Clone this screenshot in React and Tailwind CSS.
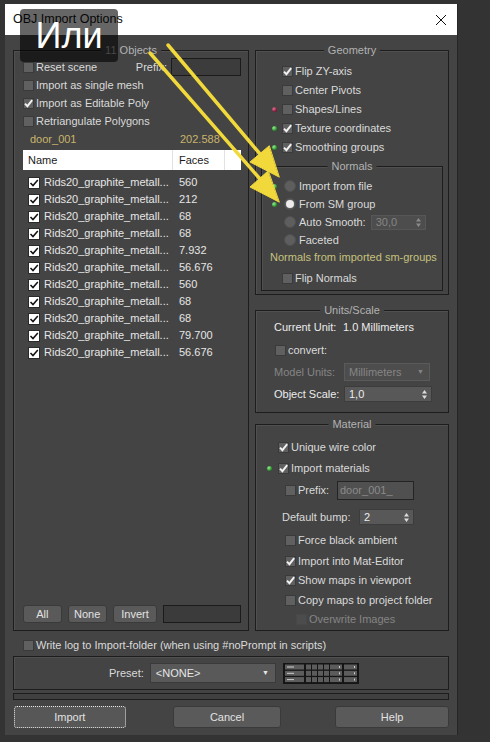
import React from 'react';

const rows = ['560', '212', '68', '68', '7.932', '56.676', '560', '68', '68', '79.700', '56.676'];

function Box({ checked, disabled }) {
  return (
    <span
      className={`flex h-[11px] w-[11px] shrink-0 items-center justify-center border ${
        disabled ? 'border-[#484848] bg-[#4c4c4c]' : 'border-[#3a3a3a] bg-[#606060]'
      }`}
    >
      {checked && (
        <svg width="9" height="9" viewBox="0 0 9 9">
          <path d="M1 4.6 L3.4 7.2 L8.2 1.2" fill="none" stroke="#f2f2f2" strokeWidth="1.9" />
        </svg>
      )}
    </span>
  );
}

function Check({ label, checked, disabled, className = '' }) {
  return (
    <div className={`flex items-center ${className}`}>
      <Box checked={checked} disabled={disabled} />
      <span className={`ml-[2px] whitespace-nowrap ${disabled ? 'text-[#858585]' : ''}`}>{label}</span>
    </div>
  );
}

function Radio({ on }) {
  return (
    <span className="flex h-[12px] w-[12px] shrink-0 items-center justify-center rounded-full border border-[#505050] bg-[#5e5e5e]">
      {on && <span className="h-[8px] w-[8px] rounded-full bg-[#ececec]" />}
    </span>
  );
}

function Dot({ red }) {
  return (
    <span
      className={`h-[5px] w-[5px] rounded-full ${
        red
          ? 'bg-[radial-gradient(circle_at_35%_35%,#e07090_0%,#701030_75%)]'
          : 'bg-[radial-gradient(circle_at_35%_35%,#90f090_0%,#1c7a1c_75%)]'
      }`}
    />
  );
}

function Spin({ value, disabled, className = '' }) {
  return (
    <div
      className={`flex items-center justify-between border pl-[4px] pr-[4px] ${
        disabled ? 'border-[#575757] bg-[#4d4d4d] text-[#858585]' : 'border-[#3c3c3c] bg-[#585858] text-[#ececec]'
      } ${className}`}
    >
      <span>{value}</span>
      <svg width="5" height="9" viewBox="0 0 5 9">
        <path d="M2.5 0 L5 3.4 H0 Z M0 5.6 H5 L2.5 9 Z" fill={disabled ? '#8a8a8a' : '#dcdcdc'} />
      </svg>
    </div>
  );
}

function Group({ label, className = '', children }) {
  return (
    <div className={`relative border border-[#1d1d1d] shadow-[inset_1px_1px_0_#505050] ${className}`}>
      <span className="absolute left-1/2 top-[-8px] -translate-x-1/2 whitespace-nowrap bg-[#444] px-[4px] leading-[14px] text-[#b2b2b2]">
        {label}
      </span>
      {children}
    </div>
  );
}

function Btn({ children, className = '' }) {
  return (
    <div
      className={`flex items-center justify-center rounded-[3px] border border-[#3a3a3a] bg-[#5a5a5a] text-[#e2e2e2] ${className}`}
    >
      {children}
    </div>
  );
}

export default function App() {
  return (
    <div className="relative h-[742px] w-[490px] overflow-hidden bg-[#333] font-['Liberation_Sans',Arial,sans-serif] text-[11px] text-[#dadada]">
      <div className="ml-[5px] mt-[4px] flex h-[731px] w-[453px] flex-col border-r border-[#262626]">
        {/* title bar */}
        <div className="flex h-[31px] items-center bg-white pl-[8px] pr-[10px] text-[12.5px] text-[#111]">
          <span>OBJ Import Options</span>
          <svg className="ml-auto" width="12" height="12" viewBox="0 0 12 12">
            <path d="M1 1 L11 11 M11 1 L1 11" stroke="#111" strokeWidth="1" />
          </svg>
        </div>

        {/* body */}
        <div className="flex flex-1 flex-col bg-[#444] px-[8px] pt-[15px]">
          <div className="flex gap-[6px]">
            {/* objects */}
            <Group label="11 Objects" className="flex h-[581px] w-[236px] flex-col pb-[7px] pl-[9px] pr-[7px] pt-[7px]">
              <div className="flex h-[18px] items-center">
                <Check label="Reset scene" />
                <span className="ml-auto mr-[4px]">Prefix:</span>
                <div className="h-[18px] w-[70px] border border-[#1b1b1b] bg-[#3c3c3c]" />
              </div>
              <Check label="Import as single mesh" className="h-[18px]" />
              <Check label="Import as Editable Poly" checked className="h-[18px]" />
              <Check label="Retriangulate Polygons" className="h-[18px]" />
              <div className="flex h-[18px] items-center pl-[7px] text-[#c9b46c]">
                <span className="w-[150px]">door_001</span>
                <span>202.588</span>
              </div>
              <div className="mt-[2px] flex h-[20px] items-center bg-white text-[11px] text-[#1a1a1a]">
                <span className="w-[149px] pl-[5px]">Name</span>
                <span className="h-full w-[53px] border-l border-r border-[#e2e2e2] pl-[6px] leading-[20px]">Faces</span>
              </div>
              <div className="mt-[4px] flex flex-col text-[11px] text-[#e6e6e6]">
                {rows.map((f, i) => (
                  <div key={i} className="flex h-[17px] items-center pl-[5px]">
                    <span className="flex h-[12px] w-[12px] items-center justify-center border border-[#2a2a2a] bg-white">
                      <svg width="10" height="10" viewBox="0 0 10 10">
                        <path d="M1.5 5 L4 7.6 L8.8 2" fill="none" stroke="#111" strokeWidth="1.5" />
                      </svg>
                    </span>
                    <span className="ml-[4px] w-[135px] whitespace-nowrap">Rids20_graphite_metall...</span>
                    <span>{f}</span>
                  </div>
                ))}
              </div>
              <div className="mt-auto flex h-[18px] gap-[6px] text-[11px]">
                <Btn className="w-[39px]">All</Btn>
                <Btn className="w-[39px]">None</Btn>
                <Btn className="w-[45px]">Invert</Btn>
                <div className="w-[78px] border border-[#1b1b1b] bg-[#3b3b3b]" />
              </div>
            </Group>

            {/* right column */}
            <div className="flex w-[195px] flex-col">
              <Group label="Geometry" className="h-[245px] pl-[14px] pt-[11px]">
                {[
                  ['Flip ZY-axis', true, null],
                  ['Center Pivots', false, null],
                  ['Shapes/Lines', false, 'red'],
                  ['Texture coordinates', true, 'green'],
                  ['Smoothing groups', true, 'green'],
                ].map(([l, c, d]) => (
                  <div key={l} className="flex h-[19px] items-center">
                    <span className="flex w-[8px] justify-center">{d && <Dot red={d === 'red'} />}</span>
                    <span className="ml-[4px]">
                      <Check label={l} checked={c} />
                    </span>
                  </div>
                ))}
                <div className="ml-[-9px] mr-[5px] mt-[9px] h-[125px]">
                  <Group label="Normals" className="h-[125px] pl-[8px] pt-[10px]">
                    {[
                      ['Import from file', false],
                      ['From SM group', true],
                    ].map(([l, on]) => (
                      <div key={l} className="flex h-[18px] items-center">
                        <span className="flex w-[8px] justify-center">
                          <Dot />
                        </span>
                        <span className="ml-[6px]">
                          <Radio on={on} />
                        </span>
                        <span className="ml-[3px]">{l}</span>
                      </div>
                    ))}
                    <div className="flex h-[18px] items-center">
                      <span className="w-[8px]" />
                      <span className="ml-[6px]">
                        <Radio />
                      </span>
                      <span className="ml-[3px]">Auto Smooth:</span>
                      <Spin value="30,0" disabled className="ml-[5px] h-[15px] w-[55px]" />
                    </div>
                    <div className="flex h-[18px] items-center">
                      <span className="w-[8px]" />
                      <span className="ml-[6px]">
                        <Radio />
                      </span>
                      <span className="ml-[3px]">Faceted</span>
                    </div>
                    <div className="flex h-[17px] items-center text-[#c5c27c]">Normals from imported sm-groups</div>
                    <Check label="Flip Normals" className="ml-[12px] mt-[3px] h-[18px]" />
                  </Group>
                </div>
              </Group>

              <Group label="Units/Scale" className="mt-[15px] h-[103px] pl-[18px] pt-[7px]">
                <div className="flex h-[18px] items-center text-[#ececec]">
                  <span className="w-[69px]">Current Unit:</span>
                  <span>1.0 Millimeters</span>
                </div>
                <Check label="convert:" className="ml-[1px] mt-[5px] h-[18px]" />
                <div className="mt-[4px] flex h-[18px] items-center">
                  <span className="w-[70px] text-[#858585]">Model Units:</span>
                  <div className="flex h-[18px] w-[86px] items-center justify-between border border-[#5a5a5a] bg-[#4d4d4d] pl-[4px] pr-[5px] text-[#858585]">
                    <span>Millimeters</span>
                    <span className="text-[7px]">▼</span>
                  </div>
                </div>
                <div className="mt-[4px] flex h-[18px] items-center text-[#ececec]">
                  <span className="w-[70px]">Object Scale:</span>
                  <Spin value="1,0" className="h-[16px] w-[88px]" />
                </div>
              </Group>

              <Group label="Material" className="mt-[11px] h-[207px] pl-[11px] pt-[12px]">
                <div className="flex h-[20px] items-center">
                  <span className="w-[5px]" />
                  <Check label="Unique wire color" checked className="ml-[6px]" />
                </div>
                <div className="mt-[1px] flex h-[20px] items-center">
                  <span className="flex w-[5px] justify-center">
                    <Dot />
                  </span>
                  <Check label="Import materials" checked className="ml-[6px]" />
                </div>
                <div className="mt-[2px] flex h-[20px] items-center">
                  <Check label="Prefix:" className="ml-[18px] w-[52px]" />
                  <div className="flex h-[19px] w-[77px] items-center border border-[#242424] bg-[#505050] pl-[2px] text-[#8a8a8a]">
                    door_001_
                  </div>
                </div>
                <div className="mt-[7px] flex h-[20px] items-center">
                  <span className="ml-[15px] w-[77px]">Default bump:</span>
                  <Spin value="2" className="h-[16px] w-[55px]" />
                </div>
                <Check label="Force black ambient" className="ml-[18px] mt-[3px] h-[20px]" />
                <Check label="Import into Mat-Editor" checked className="ml-[18px] mt-[1px] h-[20px]" />
                <Check label="Show maps in viewport" checked className="ml-[18px] h-[19px]" />
                <Check label="Copy maps to project folder" className="ml-[18px] h-[20px]" />
                <Check label="Overwrite Images" disabled className="ml-[29px] h-[19px]" />
              </Group>
            </div>
          </div>

          <Check
            label="Write log to Import-folder (when using #noPrompt in scripts)"
            className="ml-[10px] mt-[5px] h-[18px]"
          />

          <div className="mt-[2px] flex h-[34px] items-center border border-[#1d1d1d] pl-[95px] shadow-[inset_1px_1px_0_#505050]">
            <span className="text-[11px]">Preset:</span>
            <div className="ml-[6px] flex h-[20px] w-[126px] items-center justify-between border border-[#3a3a3a] bg-[#595959] pl-[5px] pr-[6px] text-[11px] text-[#e6e6e6]">
              <span>&lt;NONE&gt;</span>
              <span className="text-[7px]">▼</span>
            </div>
            <svg className="ml-[7px]" width="76" height="21" viewBox="0 0 76 21">
              <rect x="0" y="0" width="76" height="21" fill="#151515" />
              {[0, 1, 2].map((r) => {
                const y = 1.5 + r * 6.3;
                return (
                  <g key={r}>
                    <rect x="2" y={y} width="19" height="5" fill="#5c5c5c" />
                    <rect x="4" y={y + 2} width="7" height="1" fill="#d0d0d0" />
                    {[23, 29, 35, 41].map((x) => (
                      <rect key={x} x={x} y={y} width="5" height="5" fill="#5c5c5c" />
                    ))}
                    <rect x="47" y={y} width="12" height="5" fill="#5c5c5c" />
                    <rect x="56" y={y + 1.5} width="1" height="2" fill="#d0d0d0" />
                    <rect x="61" y={y} width="13" height="5" fill="#5c5c5c" />
                    <rect x="71" y={y + 1.5} width="1" height="2" fill="#d0d0d0" />
                  </g>
                );
              })}
            </svg>
          </div>

          <div className="mt-[3px] h-[7px] border border-[#1d1d1d] bg-[#404040]" />

          <div className="mt-[6px] flex h-[22px] text-[11px]">
            <div className="ml-[1px] flex w-[112px] items-center justify-center rounded-[3px] border border-dotted border-[#e8e8e8] bg-[#575757] text-[#e2e2e2]">
              Import
            </div>
            <Btn className="ml-[47px] w-[109px]">Cancel</Btn>
            <Btn className="ml-[54px] w-[114px]">Help</Btn>
          </div>
        </div>
      </div>

      {/* annotation overlay */}
      <div className="absolute left-[20px] top-[9px] flex h-[53px] w-[98px] items-center justify-center rounded-[4px] bg-[rgba(0,0,0,0.6)] text-[36px] leading-none text-white">
        Или
      </div>
      <svg className="pointer-events-none absolute left-0 top-0" width="490" height="742" viewBox="0 0 490 742">
        <g fill="#f1d93c" stroke="#f1d93c" strokeLinecap="round">
          <line x1="168" y1="45" x2="260" y2="154" strokeWidth="3.5" />
          <polygon points="279,177 250,162 269,146" strokeWidth="1" strokeLinejoin="round" />
          <line x1="150" y1="53" x2="260" y2="179" strokeWidth="3.5" />
          <polygon points="279,202 250,187 268,171" strokeWidth="1" strokeLinejoin="round" />
        </g>
      </svg>
    </div>
  );
}
